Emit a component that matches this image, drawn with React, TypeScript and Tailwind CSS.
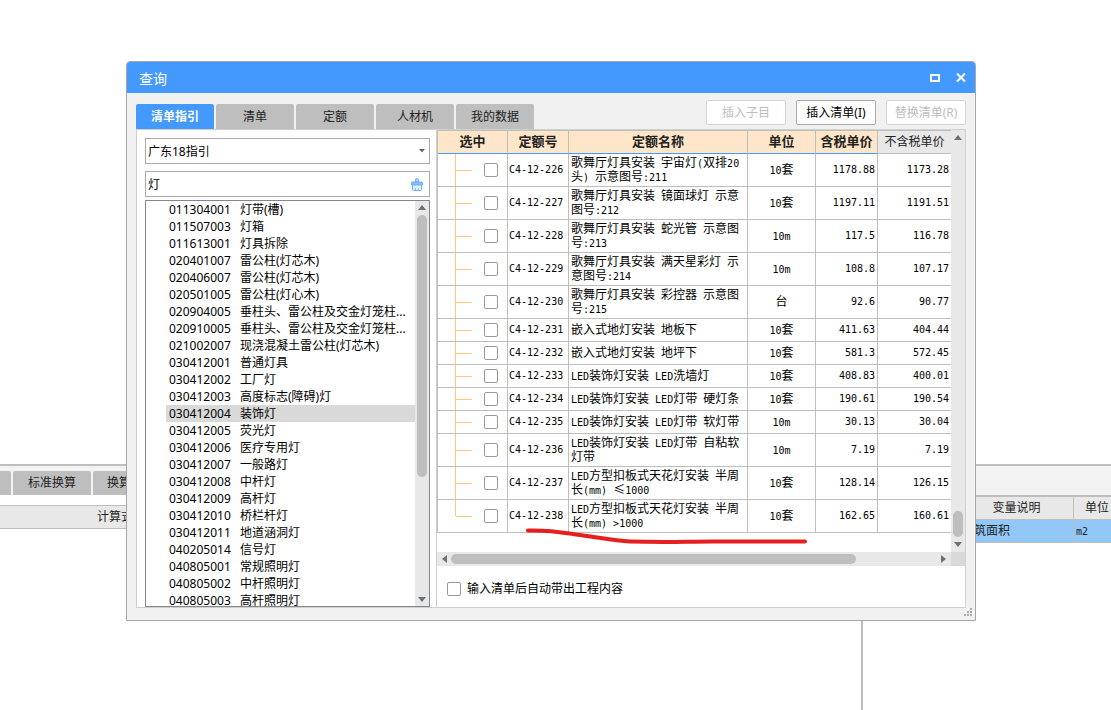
import { useState } from 'react'

interface ListItem {
  code: string
  name: string
}

interface QuotaRow {
  code: string
  name: string
  unit: string
  taxed: string
  untaxed: string
}

const TABS = ['清单指引', '清单', '定额', '人材机', '我的数据']

const LIST_ITEMS: ListItem[] = [
  { code: '011304001', name: '灯带(槽)' },
  { code: '011507003', name: '灯箱' },
  { code: '011613001', name: '灯具拆除' },
  { code: '020401007', name: '雷公柱(灯芯木)' },
  { code: '020406007', name: '雷公柱(灯芯木)' },
  { code: '020501005', name: '雷公柱(灯心木)' },
  { code: '020904005', name: '垂柱头、雷公柱及交金灯笼柱...' },
  { code: '020910005', name: '垂柱头、雷公柱及交金灯笼柱...' },
  { code: '021002007', name: '现浇混凝土雷公柱(灯芯木)' },
  { code: '030412001', name: '普通灯具' },
  { code: '030412002', name: '工厂灯' },
  { code: '030412003', name: '高度标志(障碍)灯' },
  { code: '030412004', name: '装饰灯' },
  { code: '030412005', name: '荧光灯' },
  { code: '030412006', name: '医疗专用灯' },
  { code: '030412007', name: '一般路灯' },
  { code: '030412008', name: '中杆灯' },
  { code: '030412009', name: '高杆灯' },
  { code: '030412010', name: '桥栏杆灯' },
  { code: '030412011', name: '地道涵洞灯' },
  { code: '040205014', name: '信号灯' },
  { code: '040805001', name: '常规照明灯' },
  { code: '040805002', name: '中杆照明灯' },
  { code: '040805003', name: '高杆照明灯' },
]

const QUOTA_ROWS: QuotaRow[] = [
  { code: 'C4-12-226', name: '歌舞厅灯具安装 宇宙灯(双排20\n头) 示意图号:211', unit: '10套', taxed: '1178.88', untaxed: '1173.28' },
  { code: 'C4-12-227', name: '歌舞厅灯具安装 镜面球灯 示意\n图号:212', unit: '10套', taxed: '1197.11', untaxed: '1191.51' },
  { code: 'C4-12-228', name: '歌舞厅灯具安装 蛇光管 示意图\n号:213', unit: '10m', taxed: '117.5', untaxed: '116.78' },
  { code: 'C4-12-229', name: '歌舞厅灯具安装 满天星彩灯 示\n意图号:214', unit: '10m', taxed: '108.8', untaxed: '107.17' },
  { code: 'C4-12-230', name: '歌舞厅灯具安装 彩控器 示意图\n号:215', unit: '台', taxed: '92.6', untaxed: '90.77' },
  { code: 'C4-12-231', name: '嵌入式地灯安装 地板下', unit: '10套', taxed: '411.63', untaxed: '404.44' },
  { code: 'C4-12-232', name: '嵌入式地灯安装 地坪下', unit: '10套', taxed: '581.3', untaxed: '572.45' },
  { code: 'C4-12-233', name: 'LED装饰灯安装 LED洗墙灯', unit: '10套', taxed: '408.83', untaxed: '400.01' },
  { code: 'C4-12-234', name: 'LED装饰灯安装 LED灯带 硬灯条', unit: '10套', taxed: '190.61', untaxed: '190.54' },
  { code: 'C4-12-235', name: 'LED装饰灯安装 LED灯带 软灯带', unit: '10m', taxed: '30.13', untaxed: '30.04' },
  { code: 'C4-12-236', name: 'LED装饰灯安装 LED灯带 自粘软\n灯带', unit: '10m', taxed: '7.19', untaxed: '7.19' },
  { code: 'C4-12-237', name: 'LED方型扣板式天花灯安装 半周\n长(mm) ≤1000', unit: '10套', taxed: '128.14', untaxed: '126.15' },
  { code: 'C4-12-238', name: 'LED方型扣板式天花灯安装 半周\n长(mm) >1000', unit: '10套', taxed: '162.65', untaxed: '160.61' },
]

const ARROW_PATHS = {
  up: 'M4 0 8 5H0z',
  down: 'M0 0H8L4 5z',
  left: 'M5 0V8L0 4z',
  right: 'M0 0 5 4 0 8z',
}

function Arrow({ dir }: { dir: keyof typeof ARROW_PATHS }) {
  const vertical = dir === 'up' || dir === 'down'
  return (
    <svg
      width={vertical ? 8 : 5}
      height={vertical ? 5 : 8}
      viewBox={vertical ? '0 0 8 5' : '0 0 5 8'}
      fill="#707078"
      aria-hidden="true"
    >
      <path d={ARROW_PATHS[dir]} />
    </svg>
  )
}

// Latin runs are set in a half-width mono face next to full-width Chinese
function MixedText({ text }: { text: string }) {
  return (
    <>
      {text.split(/([ -~]+)/).filter(Boolean).map((run, i) =>
        /^[ -~]/.test(run) ? (
          <span key={i} className="font-['DejaVu_Sans_Mono',monospace] text-[10px] leading-none">{run}</span>
        ) : (
          run
        )
      )}
    </>
  )
}

function BackgroundPage() {
  return (
    <div className="flex min-h-screen flex-col pt-[464px]">
      <div className="flex flex-1 border-t-2 border-[#bebebe]">
        <div className="min-w-0 flex-1">
          <div className="flex h-[29px] items-end gap-[2px] bg-[#f3f3f3]">
            <div className="h-6 w-[11px] rounded-tr-xs bg-[#bebebe]" />
            <button className="h-6 w-[78px] rounded-t-xs bg-[#bebebe] text-[#222]">标准换算</button>
            <button className="h-6 w-[78px] rounded-t-xs bg-[#bebebe] pl-[14px] text-left text-[#222]">换算</button>
          </div>
          <div className="mt-[10px] h-6 border-y border-[#bebebe] bg-[#e8e8e8] pl-[97px] leading-[22px] text-[#222]">
            计算式
          </div>
        </div>

        <div className="w-[250px] overflow-hidden border-l-2 border-[#bebebe]">
          <div className="h-[29px] bg-[#f3f3f3]" />
          <table className="w-[257px] table-fixed border-separate border-spacing-0 border-t-2 border-[#bebebe] text-[#222]">
            <colgroup>
              <col className="w-[97px]" />
              <col className="w-[114px]" />
              <col className="w-[46px]" />
            </colgroup>
            <thead>
              <tr className="h-[23px] bg-[#e8e8e8]">
                <th className="border-r border-b border-[#bebebe] p-0" />
                <th className="border-r border-b border-[#bebebe] p-0 font-normal">变量说明</th>
                <th className="border-b border-[#bebebe] p-0 font-normal">单位</th>
              </tr>
            </thead>
            <tbody>
              <tr className="h-[23px] bg-[#92c8f8]">
                <td className="border-r border-b border-[#bebebe] p-0" />
                <td className="border-r border-b border-[#bebebe] p-0 pl-[2px]">建筑面积</td>
                <td className="border-b border-[#bebebe] p-0 pl-[2px]"><MixedText text="m2" /></td>
              </tr>
            </tbody>
          </table>
        </div>
      </div>
    </div>
  )
}

function GuidePane() {
  const [keyword, setKeyword] = useState('灯')
  const [selected, setSelected] = useState('030412004')

  return (
    <div className="w-[300px] shrink-0 border-r border-[#cfcfcf] pt-2 pr-[6px] pl-2">
      <div className="relative">
        <select
          aria-label="指引"
          className="block h-[26px] w-full appearance-none border border-[#ababab] bg-white pt-px pl-[2px] text-black outline-none"
        >
          <option>广东18指引</option>
        </select>
        <svg className="pointer-events-none absolute top-[11px] right-[5px]" width="6" height="4" viewBox="0 0 6 4" fill="#666" aria-hidden="true">
          <path d="M0 0H6L3 3.5z" />
        </svg>
      </div>

      <div className="mt-[7px] flex h-[26px] items-center border border-[#ababab] pr-[6px] pl-[2px]">
        <input
          aria-label="关键字"
          value={keyword}
          onChange={(e) => setKeyword(e.target.value)}
          className="h-full min-w-0 flex-1 text-black outline-none"
        />
        <button aria-label="清空" onClick={() => setKeyword('')}>
          <svg width="12" height="13" viewBox="0 0 12 13" fill="none" aria-hidden="true">
            <path d="M4.500 4V1.500Q4.500.500 5.500.500H6.500Q7.500.500 7.500 1.500V4" fill="#a9d0ff" stroke="#6aaeff" />
            <path d="M.5 7V5Q.5 4 1.500 4H10.500Q11.500 4 11.500 5V7Z" fill="#8cc0ff" stroke="#6aaeff" />
            <path d="M1.500 7V11.500Q1.500 12.500 2.500 12.500H9.500Q10.500 12.500 10.500 11.500V7Z" fill="#e4f0ff" stroke="#6aaeff" />
            <path d="M4.500 12V10M7.500 12V10" stroke="#8cc0ff" />
          </svg>
        </button>
      </div>

      <div className="mt-[3px] flex h-[407px] border border-[#828790]">
        <ul className="min-w-0 flex-1 overflow-hidden pl-5 text-black">
          {LIST_ITEMS.map((item) => (
            <li
              key={item.code}
              onClick={() => setSelected(item.code)}
              className={`flex h-[17px] items-center pl-[3px] leading-[17px] whitespace-nowrap ${
                item.code === selected ? 'bg-[#d9d9d9]' : ''
              }`}
            >
              <span className="w-[71px] shrink-0">{item.code}</span>
              <span>{item.name}</span>
            </li>
          ))}
        </ul>
        <div className="flex w-[14px] flex-col items-center bg-[#e8e8e8] py-1">
          <Arrow dir="up" />
          <div className="mt-[5px] mb-auto h-[262px] w-[10px] rounded-full bg-[#bebebe]" />
          <Arrow dir="down" />
        </div>
      </div>
    </div>
  )
}

function QuotaTable() {
  const headCell = 'border-r border-r-[#bebebe] border-b border-b-[#4499ff] bg-[#ffe6c8] p-0 text-[13px]'
  const cell = 'border-r border-b border-[#bebebe] p-0'

  return (
    <table className="w-full table-fixed border-separate border-spacing-0 border-t border-l border-[#bebebe] text-black">
      <colgroup>
        <col className="w-[70px]" />
        <col className="w-[61px]" />
        <col />
        <col className="w-[68px]" />
        <col className="w-[62px]" />
        <col className="w-[73px]" />
      </colgroup>
      <thead>
        <tr className="h-[23px] text-[#222]">
          <th className={headCell}>选中</th>
          <th className={headCell}>定额号</th>
          <th className={headCell}>定额名称</th>
          <th className={headCell}>单位</th>
          <th className={headCell}>含税单价</th>
          <th className="border-b border-[#bebebe] bg-[#e8e8e8] p-0 font-normal">不含税单价</th>
        </tr>
      </thead>
      <tbody>
        {QUOTA_ROWS.map((row, i) => {
          const tall = row.name.includes('\n')
          const last = i === QUOTA_ROWS.length - 1
          return (
            <tr key={row.code}>
              <td className={cell}>
                <div className={`flex items-center pl-[17px] ${tall ? 'h-8' : 'h-[22px]'}`}>
                  <span className={`w-px self-start bg-[#ffc77f] ${last ? 'h-1/2' : 'h-full'}`} />
                  <span className="h-px w-4 bg-[#ffc77f]" />
                  <input
                    type="checkbox"
                    aria-label={row.code}
                    className="ml-3 size-[14px] appearance-none rounded-[2px] border border-[#999] bg-white checked:bg-[#4499ff]"
                  />
                </div>
              </td>
              <td className={`${cell} pl-px font-['DejaVu_Sans_Mono',monospace] text-[10px]`}>{row.code}</td>
              <td className={`${cell} overflow-hidden pl-[2px] leading-[14px] whitespace-pre`}>
                <MixedText text={row.name} />
              </td>
              <td className={`${cell} text-center leading-[14px]`}><MixedText text={row.unit} /></td>
              <td className={`${cell} pr-[2px] text-right font-['DejaVu_Sans_Mono',monospace] text-[10px]`}>{row.taxed}</td>
              <td className="border-b border-[#bebebe] p-0 pr-[2px] text-right font-['DejaVu_Sans_Mono',monospace] text-[10px]">
                {row.untaxed}
              </td>
            </tr>
          )
        })}
      </tbody>
    </table>
  )
}

function QueryDialog() {
  const [activeTab, setActiveTab] = useState('清单指引')

  return (
    <div
      role="dialog"
      aria-label="查询"
      className="absolute top-[61px] right-[135px] left-[126px] rounded-t border border-[#a6a6a6] bg-[#f1f1f1]"
    >
      <div className="flex h-[31px] items-center rounded-t-[3px] bg-[#4499ff] pr-[9px] pl-3 text-white">
        <h1 className="mr-auto pt-[2px] text-sm">查询</h1>
        <button aria-label="最大化" className="mr-4">
          <svg width="10" height="8" viewBox="0 0 10 8" fill="none" stroke="white" strokeWidth="2" aria-hidden="true">
            <path d="M1 1H9V7H1z" />
          </svg>
        </button>
        <button aria-label="关闭">
          <svg width="10" height="9" viewBox="0 0 10 9" stroke="white" strokeWidth="2" aria-hidden="true">
            <path d="M1 .5 9 8.500M9 .5 1 8.500" />
          </svg>
        </button>
      </div>

      <div className="px-[9px] pb-3">
        <div className="flex h-9 items-end justify-between">
          <div className="flex gap-[2px]">
            {TABS.map((tab) => (
              <button
                key={tab}
                onClick={() => setActiveTab(tab)}
                className={`h-[25px] w-[78px] rounded-t-xs ${
                  tab === activeTab ? 'bg-[#4499ff] font-bold text-white' : 'bg-[#bebebe] text-[#222]'
                }`}
              >
                {tab}
              </button>
            ))}
          </div>
          <div className="mb-1 flex gap-[10px]">
            <button disabled className="h-[25px] w-20 rounded-xs border border-[#d5d5d5] bg-white text-[#bebebe]">插入子目</button>
            <button className="h-[25px] w-20 rounded-xs border border-[#adadad] bg-white text-black">插入清单(I)</button>
            <button disabled className="h-[25px] w-20 rounded-xs border border-[#d5d5d5] bg-white text-[#bebebe]">替换清单(R)</button>
          </div>
        </div>

        <div className="flex border border-[#cfcfcf] bg-white">
          <GuidePane />

          <div className="min-w-0 flex-1">
            <div className="flex h-[422px]">
              <div className="min-w-0 flex-1">
                <QuotaTable />
              </div>
              <div className="flex w-[14px] flex-col items-center bg-[#e8e8e8] py-[5px]">
                <Arrow dir="up" />
                <div className="mt-auto mb-[5px] h-[26px] w-[10px] rounded-full bg-[#bebebe]" />
                <Arrow dir="down" />
              </div>
            </div>
            <div className="flex h-[14px] bg-[#e8e8e8]">
              <div className="flex flex-1 items-center px-[5px]">
                <Arrow dir="left" />
                <div className="mx-1 flex-1">
                  <div className="h-[10px] w-5/6 rounded-full bg-[#bebebe]" />
                </div>
                <Arrow dir="right" />
              </div>
              <div className="w-[14px] bg-[#d9d9d9]" />
            </div>
            <label className="flex h-[41px] items-center gap-[6px] pt-[5px] pl-[10px] text-black">
              <input type="checkbox" className="size-[14px] appearance-none rounded-[2px] border border-[#999] bg-white checked:bg-[#4499ff]" />
              输入清单后自动带出工程内容
            </label>
          </div>
        </div>
      </div>

      {/* resize grip */}
      <svg className="absolute right-[3px] bottom-[4px]" width="8" height="8" viewBox="0 0 8 8" fill="#ababab" aria-hidden="true">
        <path d="M6 0h2v2H6zM3 3h2v2H3zM6 3h2v2H6zM0 6h2v2H0zM3 6h2v2H3zM6 6h2v2H6z" />
      </svg>

      {/* hand-drawn red underline */}
      <svg
        className="pointer-events-none absolute top-[462px] left-[395px]"
        width="290"
        height="20"
        viewBox="0 0 290 20"
        fill="none"
        stroke="#e61e1e"
        strokeWidth="4"
        strokeLinecap="round"
        aria-hidden="true"
      >
        <path d="M6 6.500C28 6 38 8 54 10.500C74 13 92 17 108 17.500C150 18.500 160 17.500 190 17.500H283" />
      </svg>
    </div>
  )
}

export default function App() {
  return (
    <main className="relative min-h-screen overflow-hidden bg-white font-['Noto_Sans','Noto_Sans_CJK_SC',sans-serif] text-xs">
      <BackgroundPage />
      <QueryDialog />
    </main>
  )
}
